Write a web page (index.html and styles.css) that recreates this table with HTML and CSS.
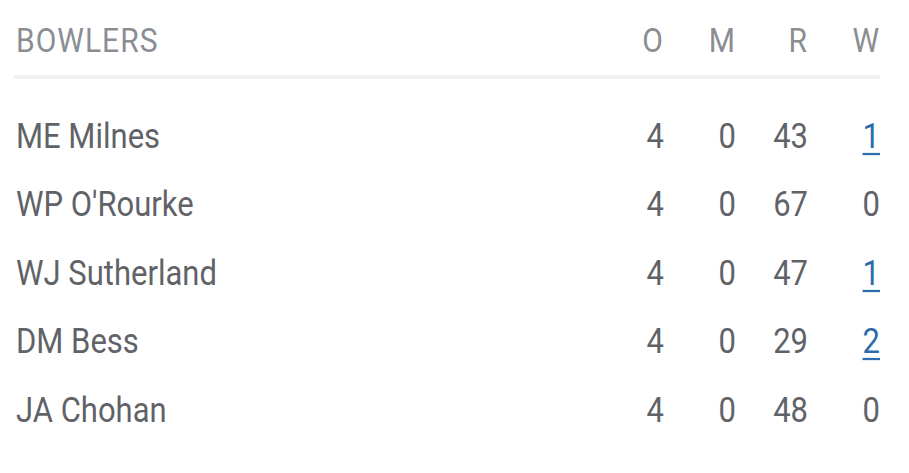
FILE: index.html
```html
<!DOCTYPE html>
<html lang="en">
<head>
  <meta charset="UTF-8">
  <title>Bowlers</title>
  <link rel="stylesheet" href="styles.css">
</head>
<body>

  <div class="bowling-card">
    <div class="row head">
      <div class="name">BOWLERS</div>
      <div class="num">O</div>
      <div class="num">M</div>
      <div class="num">R</div>
      <div class="num">W</div>
    </div>

    <div class="rows">
      <div class="row">
        <div class="name">ME Milnes</div>
        <div class="num">4</div>
        <div class="num">0</div>
        <div class="num">43</div>
        <div class="num"><a href="#">1</a></div>
      </div>
      <div class="row">
        <div class="name">WP O'Rourke</div>
        <div class="num">4</div>
        <div class="num">0</div>
        <div class="num">67</div>
        <div class="num">0</div>
      </div>
      <div class="row">
        <div class="name">WJ Sutherland</div>
        <div class="num">4</div>
        <div class="num">0</div>
        <div class="num">47</div>
        <div class="num"><a href="#">1</a></div>
      </div>
      <div class="row">
        <div class="name">DM Bess</div>
        <div class="num">4</div>
        <div class="num">0</div>
        <div class="num">29</div>
        <div class="num"><a href="#">2</a></div>
      </div>
      <div class="row">
        <div class="name">JA Chohan</div>
        <div class="num">4</div>
        <div class="num">0</div>
        <div class="num">48</div>
        <div class="num">0</div>
      </div>
    </div>
  </div>

</body>
</html>
```

FILE: styles.css
```css
* {
  box-sizing: border-box;
  font-family: 'Roboto', sans-serif;
}

body {
  background-color: #fff;
  margin: 0;
  padding: 0;
}

.bowling-card {
  padding: 18px 29px 0 14px;
}

.row {
  display: grid;
  grid-template-columns: 1fr 72px 72px 72px 72px;
  align-items: center;
  font-size: 31px;
  color: #5f6368;
  height: 68.5px;
}

/* the glyphs in the app are drawn a little taller than plain Roboto */
.row > div {
  transform: scaleY(1.13);
}

.head {
  height: 61px;
  font-size: 30px;
  letter-spacing: 1px;
  color: #8a8d92;
  border-bottom: 4px solid #f0f1f3;
  padding-bottom: 13px;
}

.rows {
  padding-top: 23px;
}

.name {
  padding-left: 2px;
}

.num {
  text-align: right;
}

.num a {
  color: #2c6cad;
  text-decoration: underline;
  text-decoration-thickness: 2px;
  text-underline-offset: 4px;
}
```
